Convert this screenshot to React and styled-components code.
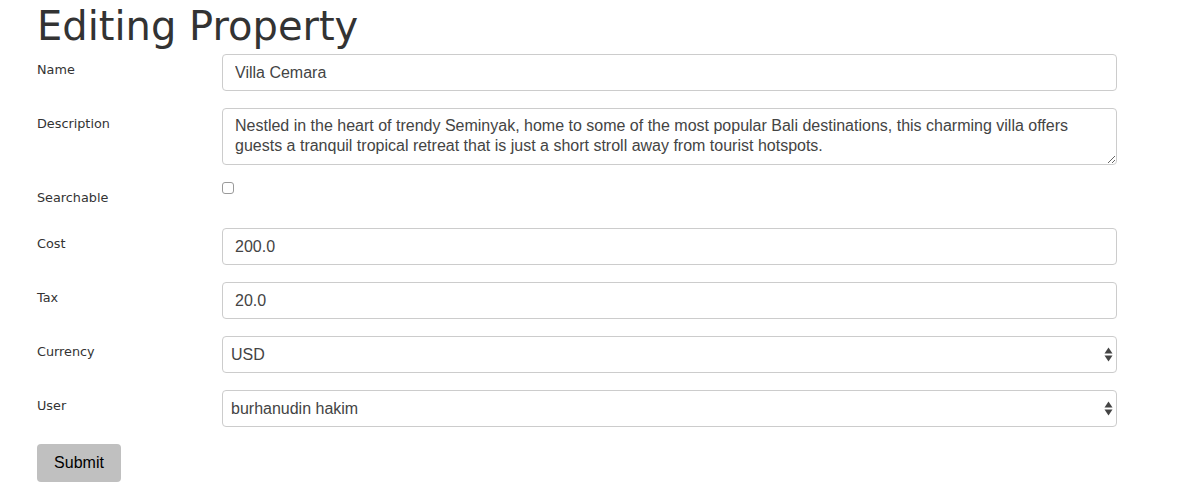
import styled, { createGlobalStyle } from "styled-components";

const GlobalStyle = createGlobalStyle`
    body {
        margin: 0;
        background: #ffffff;
        font-family: "DejaVu Sans", Verdana, sans-serif;
        color: #333333;
    }
`

const Page = styled.div`
    padding-left: 37px;
    width: 1080px;
`

const Title = styled.h1`
    margin: 6px 0 8px 0;
    font-family: "DejaVu Sans", Verdana, sans-serif;
    font-size: 40px;
    line-height: 40px;
    font-weight: normal;
    color: #333333;
`

const Form = styled.form`
    display: grid;
    grid-template-columns: 185px 895px;
    row-gap: 17px;
`

const Label = styled.label`
    padding-top: 8px;
    font-size: 12.8px;
    line-height: 16px;
    color: #333333;
`

const fieldBase = `
    box-sizing: border-box;
    width: 100%;
    border: 1px solid #cccccc;
    border-radius: 4px;
    background: #ffffff;
    font-family: "Liberation Sans", Arial, sans-serif;
    font-size: 16px;
    color: #444444;
    outline: none;
`

const Input = styled.input`
    ${fieldBase}
    height: 37px;
    padding: 8px 12px;
`

const TextArea = styled.textarea`
    ${fieldBase}
    display: block;
    height: 57px;
    padding: 7px 12px;
    line-height: 20px;
    resize: vertical;
`

const CheckCell = styled.div`
    min-height: 29px;
`

const Check = styled.input`
    appearance: none;
    margin: 0;
    display: block;
    width: 12px;
    height: 12px;
    border: 1px solid #9a9a9a;
    border-radius: 3px;
    background: #ffffff;
`

const SelectWrap = styled.div`
    position: relative;
`

const Select = styled.select`
    ${fieldBase}
    appearance: none;
    height: 37px;
    padding: 8px 24px 8px 8px;
`

const Arrows = styled.svg`
    position: absolute;
    right: 4px;
    top: 11px;
    pointer-events: none;
`

const SubmitButton = styled.button`
    grid-column: 1 / 2;
    justify-self: start;
    width: 84px;
    height: 38px;
    border: none;
    border-radius: 4px;
    background: #c0c0c0;
    font-family: "Liberation Sans", Arial, sans-serif;
    font-size: 16px;
    color: #000000;
`

function SelectField({ value, options }) {
    return (
        <SelectWrap>
            <Select defaultValue={value}>
                {options.map(o => <option key={o}>{o}</option>)}
            </Select>
            <Arrows width="9" height="15" viewBox="0 0 9 15">
                <path d="M4.5 0.5 L8.5 6.5 L0.5 6.5 Z" fill="#444444" />
                <path d="M4.5 14.5 L8.5 8.5 L0.5 8.5 Z" fill="#444444" />
            </Arrows>
        </SelectWrap>
    )
}

export default function App() {
    return (
        <Page>
            <GlobalStyle />
            <Title>Editing Property</Title>
            <Form onSubmit={e => e.preventDefault()}>
                <Label>Name</Label>
                <Input defaultValue="Villa Cemara" />

                <Label>Description</Label>
                <TextArea defaultValue="Nestled in the heart of trendy Seminyak, home to some of the most popular Bali destinations, this charming villa offers guests a tranquil tropical retreat that is just a short stroll away from tourist hotspots." />

                <Label>Searchable</Label>
                <CheckCell>
                    <Check type="checkbox" />
                </CheckCell>

                <Label>Cost</Label>
                <Input defaultValue="200.0" />

                <Label>Tax</Label>
                <Input defaultValue="20.0" />

                <Label>Currency</Label>
                <SelectField value="USD" options={["USD", "IDR", "EUR"]} />

                <Label>User</Label>
                <SelectField value="burhanudin hakim" options={["burhanudin hakim"]} />

                <SubmitButton type="submit">Submit</SubmitButton>
            </Form>
        </Page>
    )
}
